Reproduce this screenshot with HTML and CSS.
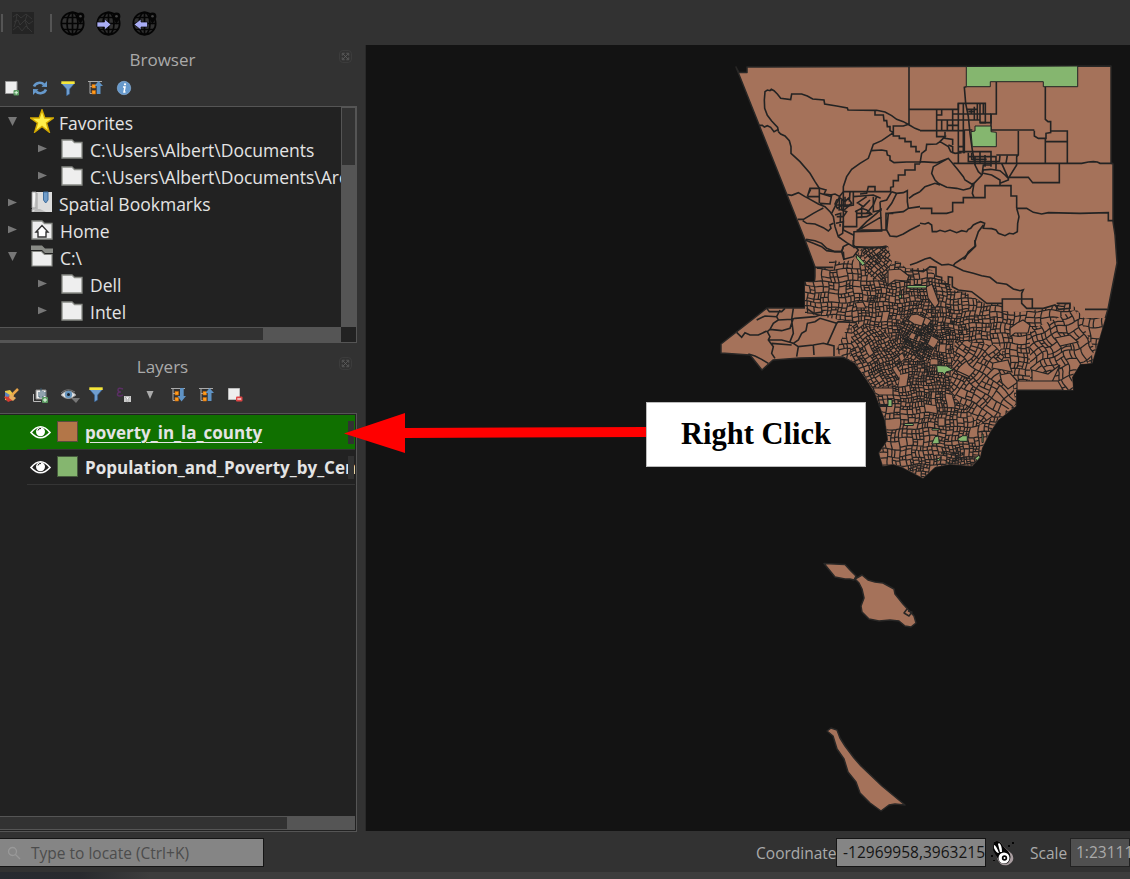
FILE: index.html
```html
<!DOCTYPE html>
<html lang="en">
<head>
<meta charset="utf-8">
<title>QGIS</title>
<link rel="stylesheet" href="styles.css">
</head>
<body>
<svg class="defs" width="0" height="0">
  <defs>
    <symbol id="globe" viewBox="0 0 26 26">
      <g fill="none" stroke="#050505" stroke-width="1.7"><circle cx="12.5" cy="13.5" r="11.2"/><ellipse cx="12.5" cy="13.5" rx="5.5" ry="11.2"/><path d="M12.500 2V25M1.500 13.500H24M3.500 7.500H21M3.500 19.500H21.500"/></g>
      <path d="M20.500 2.500a3.900 3.900 0 0 1 3.900 3.900c0 2.500-2.500 4-3.900 8c-1.400-4-3.900-5.500-3.900-8a3.900 3.900 0 0 1 3.900-3.900z" fill="#050505"/><circle cx="20.500" cy="6.300" r="1.300" fill="#444"/>
    </symbol>
    <symbol id="folder" viewBox="0 0 22 20"><path d="M1 1H11L13.500 3.500H21V19H1Z" fill="#eee" stroke="#888a85" stroke-width="1.300"/></symbol>
    <symbol id="filter" viewBox="0 0 14 15"><path d="M.5 2.500H13.500L8.600 8V13L5.500 14.800V8Z" fill="#6f9dce" stroke="#335f93" stroke-width=".6"/><path d="M.3.300H13.700V3H.300Z" fill="#f5e63a"/></symbol>
    <symbol id="tree" viewBox="0 0 15 15"><path d="M0 1.500H14M2 1V13.500H5M2 6.500H5" fill="none" stroke="#aaa" stroke-width="1"/><path d="M4 4.500h3.500v3.500H4zM4 10.500h3.500v3.500H4z" fill="#ff9d1c" stroke="#c8660a" stroke-width=".6"/></symbol>
    <symbol id="eye" viewBox="0 0 21 14"><path d="M1 7.500Q10.500-4 20 7.500Q10.500 18 1 7.500Z" fill="none" stroke="#fff" stroke-width="1.700"/><circle cx="10.500" cy="6.800" r="4.500" fill="#fff"/><path d="M8 5.500a2.600 2.600 0 0 1 3-2" stroke="#222" fill="none"/></symbol>
    <symbol id="close" viewBox="0 0 16 16"><rect x=".7" y=".7" width="14.600" height="14.600" rx="4" fill="none" stroke="#404040"/><path d="M4 4H7M9 4H12V7M12 9V12H9M7 12H4V9M4 7V4M5 5L11 11M11 5L5 11" fill="none" stroke="#606060" stroke-width="1"/></symbol>
  </defs>
</svg>
<div class="app">
  <header class="toolbar">
    <i class="grip"></i>
    <svg class="texture" viewBox="0 0 22 22"><rect width="22" height="22" fill="#242424"/><path d="M1 5L5 2L9 6L14 2L20 7M2 10L6 8L8 13L13 8L17 12L21 9M1 18L6 14L10 19L14 14L20 20M5 2L4 9L2 15M15 3L13 9L16 17" fill="none" stroke="#3b3b3b" stroke-width=".8"/></svg>
    <i class="grip second"></i>
    <svg class="globe"><use href="#globe"/></svg>
    <svg class="globe" viewBox="0 0 26 26"><use href="#globe"/><path d="M1 12H8.500V9L15 14.500L8.500 20V17H1Z" fill="#a9adf5" stroke="#050505" stroke-width=".7"/></svg>
    <svg class="globe" viewBox="0 0 26 26"><use href="#globe"/><path d="M15.500 12H9V9L2 14.500L9 20V17H15.500Z" fill="#a9adf5" stroke="#050505" stroke-width=".7"/></svg>
  </header>
  <main class="workspace">
    <aside class="side">
      <section class="panel browser">
        <div class="title"><span>Browser</span><svg class="close"><use href="#close"/></svg></div>
        <div class="tools">
          <svg viewBox="0 0 16 16"><path d="M1.500 1.500H13V13.500H1.500Z" fill="#eee" stroke="#999"/><rect x="9.500" y="10" width="5.500" height="5.500" rx="1" fill="#5b9a62"/><path d="M12.200 11V14.500M10.500 12.700H14" stroke="#d9f5dc"/></svg>
          <svg viewBox="0 0 16 16"><g fill="none" stroke="#6699cc" stroke-width="2.600"><path d="M2 6.500A6 5.500 0 0 1 12 4.500M14 9.500A6 5.500 0 0 1 4 11.500"/></g><path d="M9.500 6.800L15 7V1ZM6.500 9.200L1 9V15Z" fill="#6699cc"/></svg>
          <svg viewBox="0 0 16 16"><use href="#filter" x="1" y="1" width="14" height="15"/></svg>
          <svg viewBox="0 0 16 16"><use href="#tree" x="0" y="0" width="15" height="15"/><path d="M8.700 14V6H6.500L10.500 1L15 6H12.500V14Z" fill="#5f93c5"/></svg>
          <svg viewBox="0 0 16 16"><circle cx="8" cy="8" r="6.700" fill="#6699cc" stroke="#86add6" stroke-width=".7"/><path d="M7 7H9L8 12H9.500" fill="none" stroke="#fff" stroke-width="1.500"/><circle cx="9" cy="4.300" r="1.100" fill="#fff"/></svg>
        </div>
        <div class="box">
          <div class="tree">
            <div class="row"><i class="open"></i><svg viewBox="0 0 24 24"><path d="M12 1L14.800 9H23.300L16.500 14L19.200 23L12 17.500L4.800 23L7.500 14L.7 9H9.200Z" fill="#fff04a" stroke="#d4aa00" stroke-width="1.500"/></svg><span>Favorites</span></div>
            <div class="row child"><i class="shut"></i><svg class="f"><use href="#folder"/></svg><span>C:\Users\Albert\Documents</span></div>
            <div class="row child"><i class="shut"></i><svg class="f"><use href="#folder"/></svg><span>C:\Users\Albert\Documents\ArcGIS</span></div>
            <div class="row"><i class="shut"></i><svg viewBox="0 0 24 24"><path d="M2 2H22V22H2Z" fill="#ddd"/><path d="M2 2H6V18H2ZM2 22V19H7V3" fill="#f5f5f5" stroke="#999" stroke-width=".9"/><path d="M6 19H10L16 22H3Z" fill="#bbb"/><path d="M13.500 2H18V10L15.700 13L13.500 10Z" fill="#6f9cc9" stroke="#3e6d9d"/></svg><span>Spatial Bookmarks</span></div>
            <div class="row"><i class="shut"></i><svg class="f" viewBox="0 0 22 20"><use href="#folder"/><path d="M5 12L11 5.500L17 12H15V17H7V12Z" fill="#fff" stroke="#333" stroke-width="1.400"/></svg><span>Home</span></div>
            <div class="row"><i class="open"></i><svg class="f tall" viewBox="0 0 22 22"><path d="M0 .5H11L14 3.500H22V8H14L11 5H0Z" fill="#888a85"/><path d="M1 6.500H10.500L13.500 9.500H21V21H1Z" fill="#eee" stroke="#888a85" stroke-width="1.200"/></svg><span>C:\</span></div>
            <div class="row child"><i class="shut"></i><svg class="f"><use href="#folder"/></svg><span>Dell</span></div>
            <div class="row child"><i class="shut"></i><svg class="f"><use href="#folder"/></svg><span>Intel</span></div>
          </div>
          <div class="vbar"><i></i></div>
          <div class="hbar"><i></i></div>
          <div class="corner"></div>
        </div>
      </section>
      <section class="panel layers">
        <div class="title"><span>Layers</span><svg class="close"><use href="#close"/></svg></div>
        <div class="tools">
          <svg viewBox="0 0 16 16"><path d="M1 4L6 3L10 8L7 14L1 13Z" fill="#e8c84a"/><path d="M0 10L5 8L9 13L4 15Z" fill="#d43b32"/><path d="M1 5L6 8L4 10L1 9Z" fill="#5a83c0"/><path d="M14 2L8 8" stroke="#e8a54a" stroke-width="2.500"/><path d="M6 7L12 11L9 14L5 11Z" fill="#e6ad60"/></svg>
          <svg viewBox="0 0 16 16"><path d="M1.500 7V14.500H9" fill="none" stroke="#bbb"/><path d="M4 3H14V12H4Z" fill="#eee" stroke="#888"/><path d="M7 5V10H11V4M9 1V9M13 5V9" fill="none" stroke="#35566f"/><rect x="10" y="10" width="6" height="6" rx="1" fill="#5b9a62"/><path d="M13 11V15M11 13H15" stroke="#efe"/></svg>
          <svg class="wide" viewBox="0 0 20 16"><path d="M1 8Q8 0 16 8Q8 15 1 8Z" fill="#e5e5e5" stroke="#999"/><circle cx="8.500" cy="7.500" r="3.700" fill="#6594bd"/><circle cx="8.500" cy="7.500" r="1.500" fill="#19222c"/><path d="M1 6Q7 0 15 5" fill="none" stroke="#777"/><path d="M11 11H20L16 16Z" fill="#777"/></svg>
          <svg viewBox="0 0 16 16"><use href="#filter" x="1" y="0" width="14" height="15"/></svg>
          <svg viewBox="0 0 16 16"><path d="M7 2Q2 0 2 3Q2 5 5 5Q1 5 1.500 8Q3 10 7 8" fill="none" stroke="#5b2f65" stroke-width="1.500"/><path d="M8 9H15V15H8Z" fill="#ccc"/><path d="M9 10H14L12 12V15H11V12Z" fill="#fff" stroke="#888" stroke-width=".5"/></svg>
          <svg class="arrow" viewBox="0 0 8 8"><path d="M.5 0H7.500L4 8Z" fill="#aaa"/></svg>
          <svg viewBox="0 0 16 16"><use href="#tree" x="0" y="0" width="15" height="15"/><path d="M9 1V9H6.500L10.500 14.500L15 9H12.700V1Z" fill="#5f93c5"/></svg>
          <svg viewBox="0 0 16 16"><use href="#tree" x="0" y="0" width="15" height="15"/><path d="M8.700 14V6H6.500L10.500 1L15 6H12.500V14Z" fill="#5f93c5"/></svg>
          <svg viewBox="0 0 16 16"><path d="M1.500 1.500H12.500V12.500H1.500Z" fill="#eee" stroke="#bbb"/><rect x="9" y="9.500" width="6.500" height="5" rx="1" fill="#df4545"/><path d="M10.300 12H14.200" stroke="#fff" stroke-width="1.200"/></svg>
        </div>
        <div class="box">
          <div class="layer active"><svg class="eye"><use href="#eye"/></svg><i class="swatch brown"></i><span>poverty_in_la_county</span><b></b></div>
          <div class="layer"><svg class="eye"><use href="#eye"/></svg><i class="swatch green"></i><span>Population_and_Poverty_by_Census</span><b></b></div>
          <div class="hbar"><i></i></div>
        </div>
      </section>
    </aside>
    <svg class="map" viewBox="366 45 764 786">
      <defs><clipPath id="county"><path d="M736 67L739 72.500H747V67L909 66.500L1111 66V163L1113 164V222L1115 235L1117 263L1108 309L1092 363L1080 364L1072 377L1073 390H1016V406L998 420L990 432L982 448L980 457L972 466L950 464L935 467L923 478L902 467L893 464L883 466L879 453L888 440L885 420L875 393L867 380L855 363L843 357L800 358L773 360L762 370L750 355L721 353V344L767 308H805V282H815V267L805 240Z"/></clipPath></defs>
      <path class="land" d="M736 67L739 72.500H747V67L909 66.500L1111 66V163L1113 164V222L1115 235L1117 263L1108 309L1092 363L1080 364L1072 377L1073 390H1016V406L998 420L990 432L982 448L980 457L972 466L950 464L935 467L923 478L902 467L893 464L883 466L879 453L888 440L885 420L875 393L867 380L855 363L843 357L800 358L773 360L762 370L750 355L721 353V344L767 308H805V282H815V267L805 240Z"/>
      <g id="mesh" clip-path="url(#county)"></g>
      <g class="lines" transform="translate(710 50) scale(.33333)">
        <path d="M205 245L203 232L185 213L172 196L164 175L163 150L165 125L172 120L180 122L184 118L192 122L202 132L212 145L242 149L245 132H275L292 138L308 147L342 150L344 162L380 168L412 174L414 180L500 181L525 186L545 197L560 208L580 215L598 225L615 235L630 241"/>
        <path d="M148 226H157L163 231L172 227L182 232L192 245L205 238M205 245L212 252L225 258L238 272L243 290V310L270 335L300 370L315 395L328 415V460M597 50V222M597 178H630"/>
        <path d="M495 183V195H520L522 212H530L532 230H540V242L550 248V228H580L598 222M550 248V258H568V265H585V275H603V290H618V305H630M550 248L515 272L490 283L484 300L475 325L450 340L425 358L410 380L400 410V425L388 440M484 302L515 300L530 303L532 315L540 318V330L552 338L590 336H630M630 342H615V360H585V375H565V392H550V410L542 412V425H400M495 425V410H475L470 430L450 432"/>
        <path d="M232 434L245 436L265 428L285 440L295 445L325 462L345 470L360 485L370 500L375 530L385 560L410 578L430 590L475 593L530 592M292 440L300 415H330L348 420L342 432L365 435L360 462L330 460M292 440H330M302 418L295 432M263 508L280 508L310 490L325 482L340 474M278 512L290 520L315 522L340 533L355 543L363 535L360 525L370 520M288 568L315 572L335 580L350 595L375 605H395L400 590L415 582M395 605L402 630"/>
        <path d="M545 425L560 430L580 428L592 422V455L595 475L630 470M595 475L580 485L535 490L530 540L540 558L560 560L580 552L600 540L630 525M510 455L530 450L545 425M560 430L545 460L530 480M630 425L610 435L597 445M440 545L470 515L500 490L515 475M430 590L432 545L515 543L512 490L510 455M440 540H528V490H550M430 425V465L400 470M430 440L455 438L490 435L512 445M390 440L375 470L365 490M400 425V540L430 555M440 480V530H400M455 535L515 500M440 460L470 440M470 490L490 465L500 440M330 430L365 440M360 435L375 432L390 440"/>
        <path d="M380 450L392 445L405 455L415 445L425 460L410 470L395 465L382 475L375 462ZM395 450V480L410 485L400 500M385 480L405 478L420 465M380 500H400M378 520L400 515L398 550L385 558M375 495L392 490L390 530M435 485L455 475L470 480L485 492L470 500L440 502M455 470V505M440 490H480M490 440V485L515 480M445 460L460 470L480 450M420 425L418 455M380 465H425M388 440V480M405 440V470" stroke-width="1.500"/>
      </g>
      <g class="lines" transform="translate(920 50) scale(.33333)">
        <path d="M139 110L133 112L137 160L145 200L150 250L157 300L165 345L175 365L186 375M229 96V192H213V240H343M376 110V208L384 215H392V248L378 250V265H355L343 258V242M392 243H442V340M378 275H442M376 265V340M100 340H485L505 336L520 335L532 336L540 340H578M0 178H115V160H196V218H180M295 243V315L290 320V345L265 385M229 315H295M265 382H325L338 398H418V342M0 242H133V310"/>
        <path d="M50 178V260H75L60 275M98 178V240M65 178V195H50M50 210H115M65 210V240M82 210V242M82 226H115M98 192H213M98 210H180M115 160V310M130 160V310M172 160V210M180 160V218H213V192M190 160V192M140 178H172M145 185H163V210M154 178V192M163 170V192M75 245V265L98 268V285M115 290H130M85 285L98 290V310M133 240H157M115 305H213V350M50 242V260M115 310V340"/>
        <path d="M0 340L5 310L18 300L20 283L50 282L60 275L85 290L92 305L105 310L125 308M0 335L50 338L85 325L110 355L130 380L135 390L155 402L165 398M85 325L40 350L35 370L45 390L55 400L80 412L110 415L130 420L150 415L162 400L186 375M0 425L15 410L45 400L60 405M162 400L157 430L162 442M0 475H35V490H80L98 485V458H130V443H195V407H273V438H290V475M290 475H320L340 487L365 492L385 488L480 490L565 488V512H580"/>
        <path d="M290 475L293 485L297 500L293 520L292 545L280 552L268 550L255 557L235 550L228 540L215 536L190 535L194 520L182 515L170 520L160 525L152 535L145 538L140 545L125 542L110 548L90 540L75 545L60 541L50 545L37 545L35 525L25 518L15 522L0 520M190 525L175 545L165 575L167 588L145 605L135 625L130 628M186 375L190 360L212 358L240 362L255 375L265 385V390L240 400M190 370L215 375L240 390V407M190 345L186 375M213 320H228V358M240 316L238 335H213M262 316L258 340M245 340L265 385M145 308V335H213M155 308V330M165 318V345M180 305V340M195 315V350M145 320H213M155 328H200M188 345H213"/>
      </g>
      <g class="lines" transform="translate(710 240) scale(.33333)">
        <path d="M285 0L310 10L335 20L350 32L372 35L395 35L400 20M400 35L402 58L430 50L445 30L430 15V0M315 82H370M430 22H510L530 18M170 205L178 215H215L225 205M140 240L165 228L200 230L205 240L190 250L180 268L172 275L180 290L175 300L190 320L185 340L195 355M205 240L245 238L250 205M245 238L255 235L315 230L330 225M80 277L95 292L105 278L120 285L145 285L170 273M180 268L215 272L240 265L250 235M175 300L215 300L240 307L250 310L265 300L275 280L288 272L292 250L315 245L330 235L380 250M250 310L265 320L310 315L340 310L352 313L380 250L385 245L440 248M265 320L260 350M310 315L312 345M352 313L372 318V348M185 310L245 315M200 230L210 210M245 240L250 280L240 305M115 342L135 348L155 358L175 370M290 205L312 220L340 215"/>
      </g>
      <g class="lines" transform="translate(910 240) scale(.33333)">
        <path d="M195 0V20L180 35L165 50L150 60L135 70L130 77L115 73L95 75L75 63L60 53L45 57L20 68L0 75M130 77L160 92L190 100L215 107L240 112L260 128L290 133L310 147L330 152L340 149L335 160V175M277 235V177H367V205M335 175V190L350 205H400L435 195L445 208L480 205V190H440M525 208H593M230 190H277M0 90L40 95L60 80L78 82V108L95 112V130L115 132V110L127 112V140L145 150L185 155L215 178L230 190"/>
      </g>
      <g class="green">
        <path d="M966.300 66.500L1077.700 66V86.700H1043.300V81.700H990.300V86.700H966.300Z"/>
        <path d="M975 126H991V131.700L996.300 132.300V146.700H972.300L971 131.700L975 131Z"/>
        <path d="M856 254L865 263.300L862.700 265.700L856.700 258.300Z"/><path d="M907 285.500H926.500V288H907Z"/><path d="M899 295h2.500v3h-2.500zM879 403v2.500h9v-6h4v7h-13zM904.300 423.500h9v2h-9zM932 428.500h7v1.600h-7z"/>
        <path d="M936.700 365.500L946.700 366L953.300 370L946 372L945 375L943 372.700L937.300 372.700Z"/><path d="M935 436.700L938.500 436L939.300 443.500L931.700 444ZM957.300 439L962.700 435.700H967.300V441.300H960ZM982 434h1.200v8.500H982zM975 458.300L979.300 455L980 457.300L977.300 460.700ZM936 460L941 457L939 461ZM941 453L945 452L943 454ZM946 461L950 464L947 463Z" stroke-width=".3"/>
      </g>
      <g class="islands">
        <path d="M824 563.500L845 564.500L850 570L856 576L854 580L850 579L845 579L835 577ZM855 579L862 575L868 580L875 582L883 583L894 589L895 594L903 604L914 616L916 623L911 627L905 626L899 621L890 620L879 621L869 619L862 612L861 606L864 598L862 589L859 583Z"/>
        <path d="M827 731L831 728L837 730L840 738L845 746L854 758L861 766L882 786L905 805L895 804L889 805L881 811L870 803L860 793L856 782L848 772L844 759L837 749L833 736Z"/>
        <path class="thin" d="M907 609L904 613L909 616L912 612L908 611"/>
      </g>
    </svg>
  </main>
  <footer class="status">
    <div class="locate"><svg viewBox="0 0 14 14"><circle cx="5.500" cy="5.500" r="4"/><path d="M8.500 8.500L13 13"/></svg><span>Type to locate (Ctrl+K)</span></div>
    <span class="coord-label">Coordinate</span>
    <div class="coord">-12969958,3963215</div>
    <svg class="mouse" viewBox="0 0 24 26"><path d="M3 2Q8-1 12 6L21 14Q25 21 17 25Q9 27 6 18Z" fill="#a99da0"/><path d="M3 2Q8-1 12 6L17 11Q22 17 17 23Q10 26 7 19L2 10Z" fill="#050505"/><path d="M3 5Q5 5 8 13Q5 13 3 8ZM8 3Q11 5 11 12L9 12Q8 8 7 4Z" fill="#fff"/><circle cx="13" cy="18" r="5.500" fill="#fff"/><circle cx="13.500" cy="18" r="2.700" fill="#050505"/><circle cx="13.500" cy="18" r="1" fill="#fff"/><path d="M17 5h2v2h-2zM21 2h2v2h-2zM0 15h2v2H0zM2 20h2v1H2z" fill="#050505"/></svg>
    <span class="scale-label">Scale</span>
    <div class="scale">1:2311162</div>
  </footer>
  <div class="strip"></div>
  <svg class="callout-arrow" viewBox="0 0 302 42"><path d="M0 21.500L61 1V16L302 15V25L61 26V41Z" fill="#f00"/></svg>
  <div class="callout">Right Click</div>
</div>
<script src="mesh.js"></script>
</body>
</html>
```
FILE: styles.css
```css
* { box-sizing: border-box; }
body { margin: 0; background: #323232; font-family: "Open Sans", "Noto Sans", sans-serif; color: #e4e4e4; }
i { font-style: normal; display: block; }
svg { display: block; flex: none; }
.defs { position: absolute; }
.app { position: relative; width: 1130px; height: 879px; overflow: hidden; display: flex; flex-direction: column; }
.toolbar { height: 45px; display: flex; align-items: center; padding-left: 1px; }
.grip { width: 2px; height: 18px; background: #555; }
.grip.second { margin: 0 8px 0 16px; }
.texture { width: 22px; height: 22px; margin-left: 9px; }
.globe { width: 26px; height: 26px; margin-right: 10px; }
.workspace { height: 786px; display: flex; }
.side { width: 366px; flex: none; border-right: 1px solid #292929; }
.panel { width: 357px; }
.title { height: 29px; padding-left: 32px; display: grid; grid-template-columns: 261px 1fr; text-align: center; font-size: 17px; line-height: 29px; color: #aaa; }
.close { width: 13px; height: 13px; margin: 5px 0 0 46px; }
.tools { height: 32px; padding-left: 4px; display: flex; gap: 12px; align-items: center; padding-bottom: 5px; }
.tools svg { width: 16px; height: 16px; }
.tools .wide { width: 20px; margin-right: -4px; }
.tools .arrow { width: 8px; height: 8px; margin: 0 5px 0 2px; }
.box { border: 1px solid #555; border-left: 0; background: #222; }
.browser { height: 307px; }
.browser .box { height: 237px; display: grid; grid-template-columns: 341px 15px; grid-template-rows: 220px 15px; overflow: hidden; }
.tree { padding-top: 2px; overflow: hidden; }
.row { height: 27px; display: flex; align-items: center; font-size: 17.5px; white-space: nowrap; padding-left: 8px; }
.row.child { padding-left: 38px; }
.row > i { width: 9px; height: 9px; flex: none; background: #777; margin: -2px 14px 0 0; }
.row.child > i { margin-right: 14px; }
.open { clip-path: polygon(0 0, 100% 0, 50% 100%); }
.shut { clip-path: polygon(0 8%, 100% 50%, 0 92%); }
.row svg { width: 24px; height: 24px; margin: -3px 5px 0 -1px; }
.row .f { width: 22px; height: 20px; margin: -2px 7px 0 0; }
.row .f.tall { height: 22px; margin-top: -4px; }
.vbar { background: #555; padding: 1px 1px 0; }
.vbar i { height: 57px; background: #323232; }
.hbar { background: #555; padding: 1px 0; }
.hbar i { height: 12px; width: 263px; background: #323232; }
.corner { background: #222; }
.layers .box { height: 419px; display: flex; flex-direction: column; padding: 1px 1px 1px 0; overflow: hidden; }
.layer { position: relative; height: 35px; display: flex; align-items: center; padding-left: 30px; font-size: 17px; font-weight: 700; white-space: nowrap; overflow: hidden; flex: none; }
.layer::after { content: ""; position: absolute; left: 27px; right: 0; bottom: 0; height: 1px; background: #353535; }
.active { background: #107000; }
.active span { text-decoration: underline; text-decoration-thickness: 1px; text-underline-offset: 3px; }
.eye { width: 21px; height: 14px; margin: -2px 6px 0 0; }
.swatch { width: 21px; height: 21px; flex: none; margin: -2px 7px 0 0; border: 1px solid #5a4b3f; }
.brown { background: #b37648; }
.swatch.green { background: #85b66f; border-color: #465b3d; }
.layer b { position: absolute; right: 1px; top: 6px; width: 6px; height: 23px; background: #323232; }
.layers .hbar { margin-top: auto; height: 14px; flex: none; }
.layers .hbar i { width: 287px; }
.map { width: 764px; height: 786px; background: #131313; }
.land, .islands path { fill: #a5725a; stroke: #282726; stroke-width: 1.500; stroke-linejoin: round; }
.lines path { fill: none; stroke: #232323; stroke-width: 1.600; vector-effect: non-scaling-stroke; }
.cells { fill: #a5725a; }
.grid { fill: none; stroke: #232323; }
.green path { fill: #85b66f; stroke: #232323; stroke-width: 1; }
.islands .thin { fill: none; }
.status { height: 41px; display: flex; align-items: center; font-size: 15.500px; color: #aaa; padding-top: 2px; white-space: nowrap; }
.locate { width: 290px; height: 29px; background: #858585; border: 1px solid #151515; border-left: 0; display: flex; align-items: center; color: #4c4c4c; }
.locate svg { width: 14px; height: 14px; margin: 0 10px 0 7px; fill: none; stroke: #999; stroke-width: 1.300; }
.coord-label { width: 77px; margin-left: 492px; margin-right: 3px; }
.coord { width: 161px; height: 29px; background: #858585; border: 1px solid #151515; color: #151515; line-height: 27px; padding-left: 6px; }
.mouse { width: 24px; height: 26px; margin-left: 5px; }
.scale-label { width: 37px; margin: 0 3px 0 15px; }
.scale { height: 29px; width: 60px; flex: none; border: 1px solid #222; background: #505050; line-height: 27px; padding-left: 5px; }
.strip { height: 7px; background: linear-gradient(90deg, #272a30, #292a2e 80px, #3d3d3d 150px); }
.callout-arrow { position: absolute; left: 344px; top: 412px; width: 302px; height: 42px; }
.callout { position: absolute; left: 646px; top: 402px; width: 220px; height: 65px; background: #fff; border: 1px solid #bbb; color: #000; font: 700 30.500px/63px "Liberation Serif", serif; text-align: center; }
```
FILE: mesh.js
```js
// Draws the small census tracts of the urban part of the county.
const NS = 'http://www.w3.org/2000/svg';
const root = document.getElementById('mesh');
let seed = 20177;
const rnd = () => {
  seed = (seed * 1664525 + 1013904223) % 4294967296;
  return seed / 4294967296;
};
function add(parent, tag, attrs) {
  const el = document.createElementNS(NS, tag);
  for (const k in attrs) el.setAttribute(k, attrs[k]);
  parent.appendChild(el);
  return el;
}
// Dense neighbourhoods: x, y, tract size at the centre, growth per pixel
const hubs = [
  [921, 340, 1.9, 0.035], [878, 300, 2.8, 0.06], [875, 262, 3, 0.1], [925, 378, 2.3, 0.04],
  [940, 400, 2.8, 0.04], [958, 460, 1.6, 0.12], [920, 470, 2, 0.12], [1015, 345, 4, 0.05],
  [960, 345, 3, 0.06], [880, 370, 2.6, 0.08]
];
function size(x, y) {
  let s = 11;
  for (const [hx, hy, b, k] of hubs) s = Math.min(s, b + k * Math.hypot(x - hx, y - hy));
  return s;
}
let serial = 0;
function mesh(points, angle, scale, warp) {
  const id = 'area' + serial++;
  const clip = add(root, 'clipPath', { id });
  add(clip, 'polygon', { points });
  const g = add(root, 'g', { 'clip-path': `url(#${id})` });
  add(g, 'polygon', { points, class: 'cells' });
  const n = points.split(/[ ,]+/).map(Number);
  const xs = n.filter((_, i) => i % 2 === 0), ys = n.filter((_, i) => i % 2);
  const cx = (Math.min(...xs) + Math.max(...xs)) / 2, cy = (Math.min(...ys) + Math.max(...ys)) / 2;
  const r = Math.hypot(Math.max(...xs) - cx, Math.max(...ys) - cy);
  const c = Math.cos(angle), s = Math.sin(angle);
  const at = (u, v) => {
    const x = cx + u * c - v * s, y = cy + u * s + v * c;
    return [x + warp * (Math.sin(y / 9) + Math.sin(y / 3.7 + x / 11)) * 0.8,
      y + warp * (Math.sin(x / 10) + Math.sin(x / 4.3 - y / 12)) * 0.8];
  };
  let d = '';
  const line = (u0, v0, u1, v1) => {
    const k = Math.max(1, Math.ceil(Math.hypot(u1 - u0, v1 - v0) / 4));
    for (let i = 0; i <= k; i++) {
      const p = at(u0 + (u1 - u0) * i / k, v0 + (v1 - v0) * i / k);
      d += (i ? 'L' : 'M') + p[0].toFixed(1) + ' ' + p[1].toFixed(1);
    }
  };
  const split = (u, v, w, h) => {
    const p = at(u + w / 2, v + h / 2);
    const t = size(p[0], p[1]) * scale * (0.8 + rnd() * 0.8);
    if (Math.max(w, h) < t * 1.3 || (w < 15 && h < 15 && rnd() < 0.035)) return;
    const f = 0.35 + rnd() * 0.3;
    if (w > h * (0.75 + rnd() * 0.5)) {
      line(u + w * f, v, u + w * f, v + h);
      split(u, v, w * f, h);
      split(u + w * f, v, w * (1 - f), h);
    } else {
      line(u, v + h * f, u + w, v + h * f);
      split(u, v, w, h * f);
      split(u, v + h * f, w, h * (1 - f));
    }
  };
  split(-r, -r, 2 * r, 2 * r);
  add(g, 'path', { class: 'grid', d, 'stroke-width': 1.25 });
}
mesh('805,282 815,282 817,268 829,268 829,258 840,262 853,260 862,248 888,246 890,260 900,262 906,268 920,268 932,270 937,278 950,283 952,290 965,292 982,302 986,304 1002,304 1003,311 1020,312 1047,308 1060,304 1072,304 1084,318 1108,318 1092,370 1080,400 1010,410 980,480 910,485 870,470 870,390 850,360 835,352 850,322 805,313', 0, 1, 1);
mesh('862,248 888,246 892,262 884,282 868,276', 0.75, 0.8, 0.8);
mesh('852,322 884,330 905,350 898,385 872,388 850,358', -0.5, 0.95, 1);
mesh('955,340 1000,346 1012,378 1016,405 980,425 950,392', 0.65, 1.3, 1.6);
mesh('1030,330 1075,310 1095,350 1072,390 1030,390', -0.4, 1.05, 1.8);
mesh('900,318 925,310 940,335 930,362 904,358', 0.5, 0.9, 0.6);
// Parks, airports and other large tracts
const blocks = [
  'M1010 328L1017 323L1023 320L1030 325L1028 333L1015 333L1010 337Z',
  'M911 315L917 314L925 318L922 326L914 324L908 320Z',
  'M873 388H893V395H879L875 393Z',
  'M855 303L863 302L866 308L857 308Z',
  'M993 363L1008 360L1012 372L1003 370L992 368Z',
  'M1000 375L1010 373L1018 382L1008 389L1002 383Z',
  'M938 418H945V426H938Z',
  'M1032 370L1048 374L1060 365L1052 382L1032 388Z',
  'M926 287L932 284L939 303L935 308L928 298Z',
  'M888 270L900 269L909 276L907 281L895 280L888 285Z',
  'M955 370L968 376L970 379L958 374Z',
  'M1055 338L1070 335L1078 342L1060 346Z',
  'M1017 381H1058L1063 390H1017Z'
];
for (const d of blocks) add(root, 'path', { d, fill: '#a5725a', stroke: '#232323', 'stroke-width': 1.2 });
```
